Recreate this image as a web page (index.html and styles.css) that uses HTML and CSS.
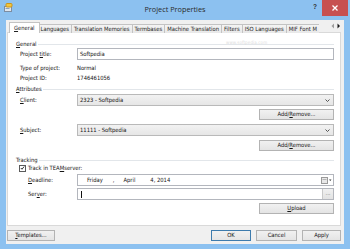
FILE: index.html
```html
<!DOCTYPE html>
<html>
<head>
<meta charset="utf-8">
<title>Project Properties</title>
<link rel="stylesheet" href="styles.css">
</head>
<body>
<div class="window">
  <div class="titlebar">
    <div class="tb-left">
      <svg class="appicon" width="9" height="9" viewBox="0 0 9 9">
        <rect x="0.5" y="3.5" width="7" height="5" fill="#dfe6ee" stroke="#7d8da1"/>
        <rect x="2" y="0.5" width="6" height="3.5" rx="1" fill="#f3c63c" stroke="#c9951d"/>
        <rect x="1.5" y="5" width="4" height="1" fill="#8aa2bf"/>
      </svg>
    </div>
    <div class="title">Project Properties</div>
    <div class="tb-right">
      <div class="help">?</div>
      <div class="close">
        <svg width="6" height="6" viewBox="0 0 6 6"><path d="M0.5 0.5 L5.5 5.5 M5.5 0.5 L0.5 5.5" stroke="#fff" stroke-width="1.3"/></svg>
      </div>
    </div>
  </div>

  <div class="client">
    <div class="tabstrip">
      <div class="tabs">
        <div class="tab active"><u>G</u>eneral</div>
        <div class="tab">Languages</div>
        <div class="tab">Translation Memories</div>
        <div class="tab">Termbases</div>
        <div class="tab">Machine Translation</div>
        <div class="tab">Filters</div>
        <div class="tab">ISO Languages</div>
        <div class="tab clipped">MIF Font M</div>
      </div>
      <div class="tabscroll">
        <svg width="10" height="6" viewBox="0 0 10 6">
          <path d="M3 0.5 L0.5 3 L3 5.5 Z" fill="#9c9c9c"/>
          <path d="M6.5 0.5 L9 3 L6.5 5.5 Z" fill="#1a1a1a"/>
        </svg>
      </div>
    </div>

    <div class="panel">
      <div class="watermark">www.softpedia.com</div>

      <div class="group-head head-general"><span><u>G</u>eneral</span></div>
      <div class="row row-input">
        <label>Project <u>ti</u>tle:</label>
        <div class="textbox">Softpedia</div>
      </div>
      <div class="row row-text r-type">
        <label>Type of project:</label>
        <span>Normal</span>
      </div>
      <div class="row row-text r-id">
        <label>Project ID:</label>
        <span>1746461056</span>
      </div>

      <div class="group-head head-attr"><span><u>A</u>ttributes</span></div>
      <div class="row row-input r-client">
        <label><u>C</u>lient:</label>
        <div class="combo">2323 - Softpedia
          <svg class="chev" width="5" height="3" viewBox="0 0 5 3"><path d="M0.5 0.5 L2.5 2.5 L4.5 0.5" fill="none" stroke="#444" stroke-width="0.9"/></svg>
        </div>
      </div>
      <div class="btnrow r-add1"><div class="btn wide">Add/<u>R</u>emove...</div></div>
      <div class="row row-input r-subject">
        <label><u>S</u>ubject:</label>
        <div class="combo">11111 - Softpedia
          <svg class="chev" width="5" height="3" viewBox="0 0 5 3"><path d="M0.5 0.5 L2.5 2.5 L4.5 0.5" fill="none" stroke="#444" stroke-width="0.9"/></svg>
        </div>
      </div>
      <div class="btnrow r-add2"><div class="btn wide">Add/<u>R</u>emove...</div></div>

      <div class="group-head head-track"><span>Tracking</span></div>
      <div class="checkrow">
        <span class="checkbox">
          <svg width="6" height="6" viewBox="0 0 6 6"><path d="M1 3 L2.4 4.5 L5 1.2" fill="none" stroke="#222" stroke-width="1.1"/></svg>
        </span>
        <span>Track in TEA<u>M</u>server:</span>
      </div>
      <div class="row row-input sub r-deadline">
        <label><u>D</u>eadline:</label>
        <div class="textbox datebox">
          <span class="d-day">Friday</span>
          <span class="d-comma">,</span>
          <span class="d-month">April</span>
          <span class="d-date">4, 2014</span>
          <span class="calicon">
            <svg width="11" height="7" viewBox="0 0 11 7">
              <rect x="0.5" y="0.5" width="6" height="6" fill="#e8e8e8" stroke="#9a9a9a"/>
              <rect x="1.5" y="2" width="4" height="1" fill="#b5b5b5"/>
              <path d="M8 2.5 L10.5 2.5 L9.25 4 Z" fill="#333"/>
            </svg>
          </span>
        </div>
      </div>
      <div class="row row-input sub r-server">
        <label>Ser<u>v</u>er:</label>
        <div class="textbox serverbox">
          <span class="caret"></span>
          <span class="browse">...</span>
        </div>
      </div>
      <div class="btnrow r-upload"><div class="btn wide"><u>U</u>pload</div></div>
    </div>

    <div class="footer">
      <div class="btn templates"><u>T</u>emplates...</div>
      <div class="btn ok">OK</div>
      <div class="btn cancel">Cancel</div>
      <div class="btn apply">Apply</div>
    </div>
  </div>
</div>
</body>
</html>
```

FILE: styles.css
```css
* {
  box-sizing: border-box;
  margin: 0;
  padding: 0;
}

html, body {
  width: 350px;
  height: 249px;
  overflow: hidden;
}

body {
  background: #8cc1f0;
  font-family: "DejaVu Sans Condensed", "Liberation Sans", sans-serif;
  font-size: 5.8px;
  color: #161616;
}

u {
  text-decoration-thickness: 0.5px;
  text-underline-offset: 1px;
}

.window {
  display: flex;
  flex-direction: column;
  height: 249px;
}

/* ---------- title bar ---------- */
.titlebar {
  height: 20px;
  display: grid;
  grid-template-columns: 1fr auto 1fr;
  align-items: start;
}

.tb-left {
  padding: 3px 0 0 4px;
}

.appicon {
  display: block;
}

.title {
  font-family: "Open Sans", "Liberation Sans", sans-serif;
  font-size: 7.3px;
  color: #2a2a2a;
  padding-top: 4px;
  line-height: 10px;
}

.tb-right {
  display: flex;
  justify-content: flex-end;
  padding-right: 2px;
}

.help {
  width: 10px;
  height: 15px;
  font: bold 6.5px "Liberation Sans", sans-serif;
  color: #2f2f2f;
  text-align: center;
  line-height: 13px;
  margin-right: 2px;
}

.close {
  width: 26px;
  height: 16px;
  background: #c75050;
  display: flex;
  align-items: center;
  justify-content: center;
}

/* ---------- client ---------- */
.client {
  flex: 1;
  margin: 0 6px 5px 6px;
  background: #f0f0f0;
  padding: 2px 3px 0 1px;
  display: flex;
  flex-direction: column;
}

/* ---------- tabs ---------- */
.tabstrip {
  height: 11px;
  display: flex;
  align-items: flex-end;
  position: relative;
  z-index: 1;
  margin-bottom: -1px;
}

.tabs {
  flex: 1;
  display: flex;
  align-items: flex-end;
  overflow: hidden;
  height: 11px;
  padding-left: 2px;
}

.tab {
  height: 9px;
  line-height: 8px;
  padding: 0 2px;
  border: 1px solid #c3c3c3;
  border-bottom: none;
  margin-left: -1px;
  background: linear-gradient(#f4f4f4, #e8e8e8);
  white-space: nowrap;
  color: #222;
}

.tab.active {
  height: 11px;
  line-height: 10px;
  background: #fff;
  margin-left: 0;
  padding: 0 4px;
  position: relative;
  z-index: 2;
  margin-right: -1px;
}

.tab.clipped {
  border-right: none;
  flex-shrink: 0;
}

.tabscroll {
  width: 11px;
  height: 11px;
  display: flex;
  align-items: center;
  justify-content: center;
  padding-bottom: 3px;
}

/* ---------- panel ---------- */
.panel {
  height: 194px;
  background: #fff;
  border: 1px solid #d9d9d9;
  padding: 7px 6px 0 8px;
  position: relative;
}

.watermark {
  position: absolute;
  left: 218px;
  top: 7px;
  font-size: 4.5px;
  color: #dcdcdc;
  letter-spacing: 0.1px;
}

.group-head {
  display: flex;
  align-items: center;
  height: 8px;
  gap: 1px;
}

.group-head::after {
  content: "";
  flex: 1;
  height: 1px;
  background: #e2e6ea;
}

.row {
  display: grid;
  grid-template-columns: 57px 1fr;
  align-items: center;
  padding-left: 4px;
}

.row.sub {
  grid-template-columns: 49px 1fr;
  padding-left: 12px;
}

.row-text {
  height: 8px;
}

.row label {
  white-space: nowrap;
}

.textbox {
  height: 12px;
  border: 1px solid #b3b6bd;
  background: #fff;
  padding-left: 2px;
  line-height: 10px;
  position: relative;
}

.combo {
  height: 12px;
  border: 1px solid #b9b9b9;
  background: linear-gradient(#f2f2f2, #e6e6e6);
  padding-left: 2px;
  line-height: 10px;
  position: relative;
}

.chev {
  position: absolute;
  right: 3px;
  top: 4px;
}

.btnrow {
  display: flex;
  justify-content: flex-end;
}

.btn {
  height: 11px;
  border: 1px solid #b3b3b3;
  background: linear-gradient(#f1f1f1, #e4e4e4);
  text-align: center;
  line-height: 9px;
  white-space: nowrap;
}

.btn.wide {
  width: 75px;
}

.r-type { margin-top: 4px; }
.r-id { margin-top: 2px; }
.head-attr { margin-top: 3px; }
.r-client { margin-top: 1px; }
.r-add1 { margin-top: 3px; }
.r-subject { margin-top: 4px; }
.r-add2 { margin-top: 4px; }
.head-track { margin-top: 5px; }

.checkrow {
  display: flex;
  align-items: center;
  gap: 2px;
  height: 8px;
  padding-left: 3px;
}

.checkbox {
  width: 7px;
  height: 7px;
  border: 1px solid #5a5a5a;
  background: #fff;
  display: flex;
  align-items: center;
  justify-content: center;
}

.r-deadline { margin-top: 2px; }
.r-server { margin-top: 2px; }
.r-upload { margin-top: 3px; }

.datebox {
  display: flex;
  align-items: center;
  padding-left: 9px;
}

.d-comma { margin-left: 10px; }
.d-month { margin-left: 9px; }
.d-date { margin-left: 15px; }

.calicon {
  margin-left: auto;
  margin-right: 1px;
  display: flex;
}

.serverbox {
  display: flex;
  align-items: center;
}

.caret {
  width: 1px;
  height: 7px;
  background: #111;
  margin-left: 1px;
}

.browse {
  margin-left: auto;
  width: 11px;
  height: 10px;
  border-left: 1px solid #c9c9c9;
  background: linear-gradient(#f1f1f1, #e2e2e2);
  color: #777;
  text-align: center;
  line-height: 8px;
}

/* ---------- footer ---------- */
.footer {
  margin-top: 4px;
  display: flex;
  gap: 5px;
}

.templates {
  width: 48px;
  margin-right: auto;
}

.ok {
  width: 40px;
  border-color: #3d7bad;
}

.cancel {
  width: 41px;
}

.apply {
  width: 39px;
}
```
